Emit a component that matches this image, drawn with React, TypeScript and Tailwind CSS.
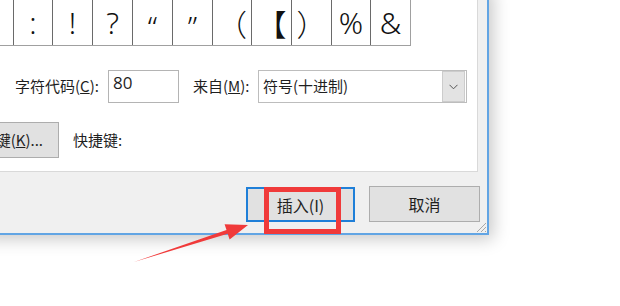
const cells = [
  { w: "w-[23px]", ch: "", cls: "" },
  { w: "w-[39px]", ch: ":", cls: "" },
  { w: "w-[40px]", ch: "!", cls: "" },
  { w: "w-[40px]", ch: "?", cls: "" },
  { w: "w-[40px]", ch: "“", cls: "text-[18px] pt-[8px]" },
  { w: "w-[40px]", ch: "”", cls: "text-[18px] pt-[8px]" },
  { w: "w-[39px]", ch: "（", cls: "font-['Noto_Sans_CJK_SC',sans-serif] text-[28px]" },
  { w: "w-[40px]", ch: "【", cls: "font-['Noto_Sans_CJK_SC',sans-serif] font-bold text-[28px]" },
  { w: "w-[40px]", ch: "）", cls: "font-['Noto_Sans_CJK_SC',sans-serif] text-[28px]" },
  { w: "w-[39px]", ch: "%", cls: "" },
  { w: "w-[40px]", ch: "&", cls: "" },
];

function Grip() {
  return (
    <svg width="12" height="12" viewBox="0 0 12 12" className="absolute right-0 bottom-0">
      <path d="M11 2 L2 11 M11 6 L6 11 M11 10 L10 11" stroke="#a8a8a8" strokeWidth="1" />
    </svg>
  );
}

export default function App() {
  return (
    <div className="relative w-[620px] h-[306px] overflow-hidden bg-white text-[#1f1f1f] font-['Noto_Sans_CJK_SC',sans-serif]">
      {/* dialog */}
      <div className="relative ml-[-20px] mt-[-14px] w-[509px] h-[249px] flex flex-col bg-[#f0f0f0] border-r-2 border-b-2 border-[#62a5e4] pt-[4px] pl-[10px] pr-[9px] shadow-[4px_4px_16px_rgba(0,0,0,0.22)]">
        <div className="h-[182px] bg-white border border-[#d9d9d9] flex flex-col">
          {/* symbol grid */}
          <div className="mt-[8px] flex w-max border-t border-b border-[#a0a0a0]">
            {cells.map((c, i) => (
              <div
                key={i}
                className={`${c.w} h-[45px] flex justify-center items-center border-r ${i === cells.length - 1 ? "border-[#a0a0a0]" : "border-[#6a6a6a]"} font-['Noto_Sans','Noto_Sans_CJK_SC',sans-serif] font-light text-[30px] leading-none text-[#111] ${c.cls}`}
              >
                {c.ch}
              </div>
            ))}
          </div>

          {/* code row */}
          <div className="mt-[24px] pl-[24px] flex items-center h-[33px] text-[15px]">
            <div className="w-[93px] whitespace-nowrap">
              字符代码(<span className="underline">C</span>):
            </div>
            <div className="w-[71px] h-[33px] border border-[#b4b4b4] pl-[4px] pt-[1px] text-[17px] leading-[22px] font-['Open_Sans',sans-serif]">
              80
            </div>
            <div className="ml-[14px] w-[65px] whitespace-nowrap">
              来自(<span className="underline">M</span>):
            </div>
            <div className="w-[209px] h-[33px] border border-[#bdbdbd] flex items-center justify-between pl-[4px] pr-[1px]">
              <span className="text-[15px]">符号(十进制)</span>
              <div className="w-[23px] h-[31px] bg-[#e3e3e3] border border-[#cccccc] flex items-center justify-center">
                <svg width="9" height="6" viewBox="0 0 9 6">
                  <path d="M0.5 0.8 L4.5 4.8 L8.5 0.8" fill="none" stroke="#555" strokeWidth="1" />
                </svg>
              </div>
            </div>
          </div>

          {/* shortcut row */}
          <div className="mt-[19px] flex items-center h-[36px] text-[15px]">
            <div className="w-[68px] h-[36px] bg-[#e1e1e1] border border-[#adadad] flex items-center justify-end pr-[15px] overflow-hidden whitespace-nowrap">
              快捷键(<span className="underline">K</span>)...
            </div>
            <div className="ml-[14px]">快捷键:</div>
          </div>
        </div>

        {/* buttons */}
        <div className="mt-[14px] mr-[-2px] flex justify-end items-start text-[16px]">
          <div className="w-[109px] h-[35px] mt-[1px] bg-[#e1e1e1] border-2 border-[#1f7fd8] flex items-center justify-center">
            插入(I)
          </div>
          <div className="ml-[14px] w-[111px] h-[36px] bg-[#e1e1e1] border border-[#adadad] flex items-center justify-center">
            取消
          </div>
        </div>
        <Grip />
      </div>

      {/* annotation box */}
      <div className="absolute left-[264px] top-[187px] w-[77px] h-[47px] border-[5px] border-[#f03a3a]" />

      {/* annotation arrow */}
      <svg width="620" height="306" className="absolute left-0 top-0 pointer-events-none">
        <polygon
          points="134,262 226.5,229.9 224.6,224.2 248,225 229.6,239.4 227.7,233.7"
          fill="#f03a3a"
        />
      </svg>
    </div>
  );
}
